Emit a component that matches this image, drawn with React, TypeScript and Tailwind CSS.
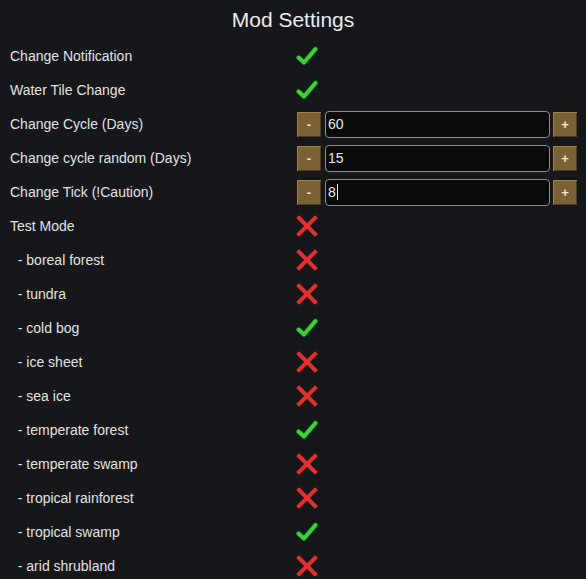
import React from 'react';

type Row =
  | { label: string; kind: 'bool'; value: boolean }
  | { label: string; kind: 'num'; value: string; caret?: boolean };

const rows: Row[] = [
  { label: 'Change Notification', kind: 'bool', value: true },
  { label: 'Water Tile Change', kind: 'bool', value: true },
  { label: 'Change Cycle (Days)', kind: 'num', value: '60' },
  { label: 'Change cycle random (Days)', kind: 'num', value: '15' },
  { label: 'Change Tick (!Caution)', kind: 'num', value: '8', caret: true },
  { label: 'Test Mode', kind: 'bool', value: false },
  { label: '  - boreal forest', kind: 'bool', value: false },
  { label: '  - tundra', kind: 'bool', value: false },
  { label: '  - cold bog', kind: 'bool', value: true },
  { label: '  - ice sheet', kind: 'bool', value: false },
  { label: '  - sea ice', kind: 'bool', value: false },
  { label: '  - temperate forest', kind: 'bool', value: true },
  { label: '  - temperate swamp', kind: 'bool', value: false },
  { label: '  - tropical rainforest', kind: 'bool', value: false },
  { label: '  - tropical swamp', kind: 'bool', value: true },
  { label: '  - arid shrubland', kind: 'bool', value: false },
];

function Check() {
  return (
    <svg width="24" height="22" viewBox="0 0 24 22">
      <path d="M3.5 12.5 L9 17.5 L20.5 4" fill="none" stroke="#0c3a0c" strokeWidth="6" strokeLinecap="round" strokeLinejoin="round" />
      <path d="M3.5 12.5 L9 17.5 L20.5 4" fill="none" stroke="#3fd13a" strokeWidth="4" strokeLinecap="round" strokeLinejoin="round" />
    </svg>
  );
}

function Cross() {
  return (
    <svg width="24" height="22" viewBox="0 0 24 22">
      <path d="M4 3 L20 19 M20 3 L4 19" fill="none" stroke="#e3302c" strokeWidth="4" strokeLinecap="square" />
    </svg>
  );
}

function StepButton({ sign }: { sign: string }) {
  return (
    <div className="flex h-[27px] w-[26px] shrink-0 items-center justify-center border border-[#1a140a] bg-[#7a6236] text-[13px] font-bold leading-none text-[#f1e6cc] shadow-[inset_1px_1px_0_#9c8450,inset_-1px_-1px_0_#4e3e22]">
      {sign}
    </div>
  );
}

export default function App() {
  return (
    <div className="h-[579px] w-[586px] overflow-hidden bg-[#15171b] text-[14px] text-[#e2e2e2]" style={{ fontFamily: '"Liberation Sans", Arial, sans-serif' }}>
      <div className="flex h-[39px] items-center justify-center text-[21px] text-[#ececec]">Mod Settings</div>
      {rows.map((row) => (
        <div key={row.label} className="flex h-[34px] items-center">
          <div className="w-[296px] shrink-0 whitespace-pre pl-[10px]">{row.label}</div>
          {row.kind === 'bool' ? (
            <div className="ml-[-1px] flex w-[24px] items-center justify-center">{row.value ? <Check /> : <Cross />}</div>
          ) : (
            <div className="flex items-center">
              <StepButton sign="-" />
              <div className="ml-[3px] flex h-[27px] w-[225px] items-center rounded-[4px] border border-[#8c8c8c] bg-[#0b0b0c] pl-[2px] text-[14px] text-[#e8e8e8]">
                {row.value}
                {row.caret ? <span className="ml-[1px] inline-block h-[16px] w-px bg-[#e8e8e8]" /> : null}
              </div>
              <div className="ml-[2px]">
                <StepButton sign="+" />
              </div>
            </div>
          )}
        </div>
      ))}
    </div>
  );
}
